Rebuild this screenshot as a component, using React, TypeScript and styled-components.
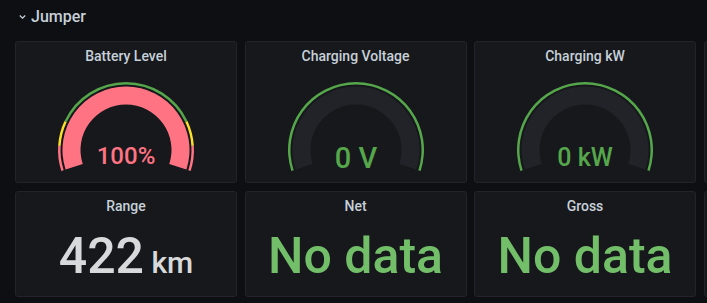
import React from "react";
import styled, { createGlobalStyle } from "styled-components";

const GlobalStyle = createGlobalStyle`
  html, body {
    margin: 0;
    padding: 0;
    background: #0e0f12;
    overflow: hidden;
  }
  body {
    font-family: Roboto, "Liberation Sans", sans-serif;
    color: #c7d0d9;
  }
`;

const Page = styled.div`
  width: 707px;
  height: 303px;
  overflow: hidden;
  background: #0e0f12;
`;

const RowHeader = styled.div`
  height: 33px;
  display: flex;
  align-items: center;
  gap: 5px;
  padding-left: 19px;
`;

const RowTitle = styled.span`
  font-size: 16px;
  font-weight: 500;
  color: #c7d0d9;
  line-height: 1;
`;

const Grid = styled.div`
  margin-top: 8px;
  padding-left: 15px;
  display: grid;
  grid-template-columns: repeat(4, 222px);
  grid-template-rows: 142px 106px;
  column-gap: 7.5px;
  row-gap: 8px;
  width: max-content;
`;

const Panel = styled.div`
  background: #16181c;
  border: 1px solid #222429;
  border-radius: 3px;
  display: flex;
  flex-direction: column;
  box-sizing: border-box;
  overflow: hidden;
`;

const PanelHeader = styled.div`
  height: 28px;
  flex: 0 0 28px;
  display: flex;
  align-items: center;
  justify-content: center;
  font-size: 14px;
  font-weight: 500;
  color: #c7d0d9;
`;

const GaugeBody = styled.div`
  flex: 1;
  display: flex;
  justify-content: center;
  align-items: flex-start;
  padding-top: 10px;
`;

const StatBody = styled.div`
  flex: 1;
  display: flex;
  justify-content: center;
  align-items: center;
  padding-bottom: 4px;
`;

const StatValue = styled.div<{ $color: string }>`
  font-size: 50px;
  font-weight: 500;
  line-height: 1;
  color: ${(p) => p.$color};
  white-space: nowrap;
`;

const StatUnit = styled.span`
  font-size: 30px;
`;

const COLORS = {
  red: "#ff7383",
  yellow: "#fade2a",
  green: "#56a64b",
  track: "#212328",
};

const START = 162;
const END = 378;

function polar(cx: number, cy: number, r: number, deg: number): [number, number] {
  const rad = (deg * Math.PI) / 180;
  return [cx + r * Math.cos(rad), cy + r * Math.sin(rad)];
}

function sector(cx: number, cy: number, ro: number, ri: number, a0: number, a1: number) {
  const large = a1 - a0 > 180 ? 1 : 0;
  const p1 = polar(cx, cy, ro, a0);
  const p2 = polar(cx, cy, ro, a1);
  const p3 = polar(cx, cy, ri, a1);
  const p4 = polar(cx, cy, ri, a0);
  return `M${p1[0]},${p1[1]} A${ro},${ro} 0 ${large} 1 ${p2[0]},${p2[1]} L${p3[0]},${p3[1]} A${ri},${ri} 0 ${large} 0 ${p4[0]},${p4[1]} Z`;
}

type Band = { from: number; to: number; color: string };

function Gauge({
  value,
  text,
  color,
  bands,
  fontSize,
  baseline,
}: {
  value: number;
  text: string;
  color: string;
  bands: Band[];
  fontSize: number;
  baseline: number;
}) {
  const cx = 70;
  const cy = 70;
  const span = END - START;
  const ang = (f: number) => START + (span * f) / 100;
  return (
    <svg width={140} height={94} viewBox="0 0 140 94">
      {bands.map((b, i) => (
        <path key={i} d={sector(cx, cy, 68, 65.5, ang(b.from), ang(b.to))} fill={b.color} />
      ))}
      <path d={sector(cx, cy, 63.5, 45.5, START, END)} fill={COLORS.track} />
      {value > 0 && (
        <path d={sector(cx, cy, 63.5, 45.5, START, ang(value))} fill={color} />
      )}
      <text
        x={cx}
        y={cy + baseline}
        textAnchor="middle"
        fontFamily="Roboto, 'Liberation Sans', sans-serif"
        fontWeight={500}
        fontSize={fontSize}
        fill={color}
      >
        {text}
      </text>
    </svg>
  );
}

const batteryBands: Band[] = [
  { from: 0, to: 10, color: COLORS.red },
  { from: 10, to: 20, color: COLORS.yellow },
  { from: 20, to: 80, color: COLORS.green },
  { from: 80, to: 90, color: COLORS.yellow },
  { from: 90, to: 100, color: COLORS.red },
];

const greenBands: Band[] = [{ from: 0, to: 100, color: COLORS.green }];

const Chevron = () => (
  <svg width="7" height="6" viewBox="0 0 7 6">
    <polyline points="0.8,1.5 3.5,4.2 6.2,1.5" fill="none" stroke="#c7d0d9" strokeWidth="1.3" />
  </svg>
);

export default function App() {
  return (
    <Page>
      <GlobalStyle />
      <RowHeader>
        <Chevron />
        <RowTitle>Jumper</RowTitle>
      </RowHeader>
      <Grid>
        <Panel>
          <PanelHeader>Battery Level</PanelHeader>
          <GaugeBody>
            <Gauge value={100} text="100%" color={COLORS.red} bands={batteryBands} fontSize={24} baseline={14} />
          </GaugeBody>
        </Panel>
        <Panel>
          <PanelHeader>Charging Voltage</PanelHeader>
          <GaugeBody>
            <Gauge value={0} text="0 V" color={COLORS.green} bands={greenBands} fontSize={29} baseline={18} />
          </GaugeBody>
        </Panel>
        <Panel>
          <PanelHeader>Charging kW</PanelHeader>
          <GaugeBody>
            <Gauge value={0} text="0 kW" color={COLORS.green} bands={greenBands} fontSize={25} baseline={16} />
          </GaugeBody>
        </Panel>
        <Panel />
        <Panel>
          <PanelHeader>Range</PanelHeader>
          <StatBody>
            <StatValue $color="#d8d9da">
              422<StatUnit> km</StatUnit>
            </StatValue>
          </StatBody>
        </Panel>
        <Panel>
          <PanelHeader>Net</PanelHeader>
          <StatBody>
            <StatValue $color="#73bf69">No data</StatValue>
          </StatBody>
        </Panel>
        <Panel>
          <PanelHeader>Gross</PanelHeader>
          <StatBody>
            <StatValue $color="#73bf69">No data</StatValue>
          </StatBody>
        </Panel>
        <Panel />
      </Grid>
    </Page>
  );
}
